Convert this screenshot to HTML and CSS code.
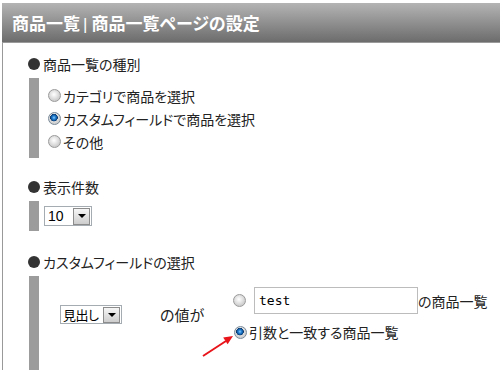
FILE: index.html
```html
<!DOCTYPE html>
<html lang="ja">
<head>
<meta charset="utf-8">
<title>商品一覧ページの設定</title>
<link rel="stylesheet" href="styles.css">
</head>
<body>
<div class="page">
  <div class="title">商品一覧<span class="sep">|</span>商品一覧ページの設定</div>
  <div class="content">
    <section class="sec">
      <h2 class="sec-head"><span class="dot"></span>商品一覧の種別</h2>
      <div class="sec-body body-kind">
        <label class="opt"><input type="radio" name="kind" class="radio">カテゴリで商品を選択</label>
        <label class="opt"><input type="radio" name="kind" class="radio" checked>カスタムフィールドで商品を選択</label>
        <label class="opt"><input type="radio" name="kind" class="radio">その他</label>
      </div>
    </section>
    <section class="sec sec-count">
      <h2 class="sec-head"><span class="dot"></span>表示件数</h2>
      <div class="sec-body body-count">
        <div class="select select-num"><span class="select-val">10</span><span class="select-btn"><span class="tri"></span></span></div>
      </div>
    </section>
    <section class="sec sec-field">
      <h2 class="sec-head"><span class="dot"></span>カスタムフィールドの選択</h2>
      <div class="sec-body body-field">
        <div class="field-cell">
          <div class="select select-field"><span class="select-val val-jp">見出し</span><span class="select-btn"><span class="tri"></span></span></div>
        </div>
        <div class="label-cell">の値が</div>
        <div class="choice-cell">
          <label class="choice choice-text"><input type="radio" name="match" class="radio"><input type="text" class="text" value="test"><span>の商品一覧</span></label>
          <label class="choice choice-arg"><input type="radio" name="match" class="radio" checked><span>引数と一致する商品一覧</span></label>
        </div>
      </div>
    </section>
  </div>
</div>
<svg class="arrow" width="500" height="370" viewBox="0 0 500 370">
  <line x1="203" y1="356" x2="226" y2="341" stroke="#e8141a" stroke-width="2"/>
  <polygon points="233,336 227.6,344.2 223.2,337.6" fill="#e8141a"/>
</svg>
</body>
</html>
```
FILE: styles.css
```css
html, body {
  margin: 0;
  overflow: hidden;
  background: #fff;
}
body {
  font-family: "Noto Sans CJK JP", sans-serif;
  font-feature-settings: "palt";
  color: #222;
  font-size: 14px;
}
.page {
  padding: 3px 0 0 2px;
  height: 370px;
  box-sizing: border-box;
}
.title {
  height: 39px;
  line-height: 39px;
  border-bottom: 1px solid #9a9a9a;
  background: linear-gradient(#b4b4b4, #6c6c6c);
  color: #fff;
  font-size: 17px;
  font-weight: bold;
  padding-left: 10px;
  white-space: nowrap;
}
.sep {
  font-family: "Liberation Sans", sans-serif;
  font-weight: normal;
  margin: 0 4px 0 3px;
}
.content {
  border-left: 1px solid #999;
  padding: 11px 0 0 25px;
  height: 330px;
}
.sec-head {
  margin: 0;
  height: 20px;
  font-size: 14px;
  font-weight: normal;
  display: flex;
  align-items: center;
  white-space: nowrap;
}
.dot {
  width: 12px;
  height: 12px;
  border-radius: 50%;
  background: #333;
  margin-right: 3px;
}
.sec-body {
  margin: 4px 0 0 1px;
  border-left: 10px solid #9c9c9c;
}
.sec-count { margin-top: 19px; }
.sec-field { margin-top: 21px; }

.body-kind {
  padding: 6px 0 5px 9px;
  display: flex;
  flex-direction: column;
}
.opt {
  height: 23px;
  display: flex;
  align-items: center;
  gap: 2px;
  white-space: nowrap;
}
.radio {
  -webkit-appearance: none;
  appearance: none;
  margin: 0;
  width: 13px;
  height: 13px;
  border-radius: 50%;
  border: 1px solid #9a9a9a;
  box-sizing: border-box;
  background: radial-gradient(circle at 45% 40%, #ffffff 0, #f0f0f0 2px, #cfcfcf 6px);
  flex: none;
}
.radio:checked {
  border-color: #7a8a99;
  background:
    radial-gradient(circle at 45% 42%, #8fd0ff 0, #2a86d6 1.5px, #0f5aa3 2.8px, #0a3466 3.6px, transparent 4px),
    radial-gradient(circle at 45% 40%, #ffffff 0, #f0f0f0 2px, #cfcfcf 6px);
}

.body-count {
  padding: 5px 0 5px 5px;
  display: flex;
}
.select {
  display: flex;
  align-items: center;
  border: 1px solid #a5acb2;
  background: #fff;
  box-sizing: border-box;
  white-space: nowrap;
}
.select-num {
  width: 48px;
  height: 20px;
}
.select-field {
  width: 62px;
  height: 19px;
}
.select-val {
  flex: 1;
  padding-left: 3px;
  font-family: "Liberation Sans", sans-serif;
  font-size: 14px;
  line-height: 16px;
  color: #000;
}
.val-jp {
  font-family: "Noto Sans CJK JP", sans-serif;
  font-size: 13px;
  padding-left: 2px;
  letter-spacing: -0.5px;
}
.select-btn {
  flex: none;
  width: 17px;
  height: 17px;
  margin-right: 1px;
  box-sizing: border-box;
  border: 1px solid #8c8c8c;
  background: linear-gradient(#f6f6f6, #cdcdcd);
  display: flex;
  align-items: center;
  justify-content: center;
}
.select-field .select-btn {
  height: 16px;
}
.tri {
  width: 0;
  height: 0;
  border-left: 4px solid transparent;
  border-right: 4px solid transparent;
  border-top: 4px solid #000;
}

.body-field {
  padding: 11px 0 40px 21px;
  display: flex;
  align-items: center;
}
.field-cell {
  width: 100px;
}
.label-cell {
  width: 73px;
  font-size: 15px;
  white-space: nowrap;
}
.choice-cell {
  display: flex;
  flex-direction: column;
}
.choice {
  display: flex;
  align-items: center;
  white-space: nowrap;
}
.choice-text {
  height: 27px;
}
.choice-text .text {
  margin: 0 0 0 8px;
  width: 164px;
  height: 27px;
  box-sizing: border-box;
  border: 1px solid #bcbcbc;
  padding: 0 0 0 4px;
  font-family: "DejaVu Sans Mono", monospace;
  font-size: 13px;
  color: #000;
  background: #fff;
  outline: none;
}
.choice-arg {
  height: 20px;
  margin-top: 8px;
  margin-left: 1px;
  gap: 2px;
}
.arrow {
  position: absolute;
  left: 0;
  top: 0;
  pointer-events: none;
}
```
